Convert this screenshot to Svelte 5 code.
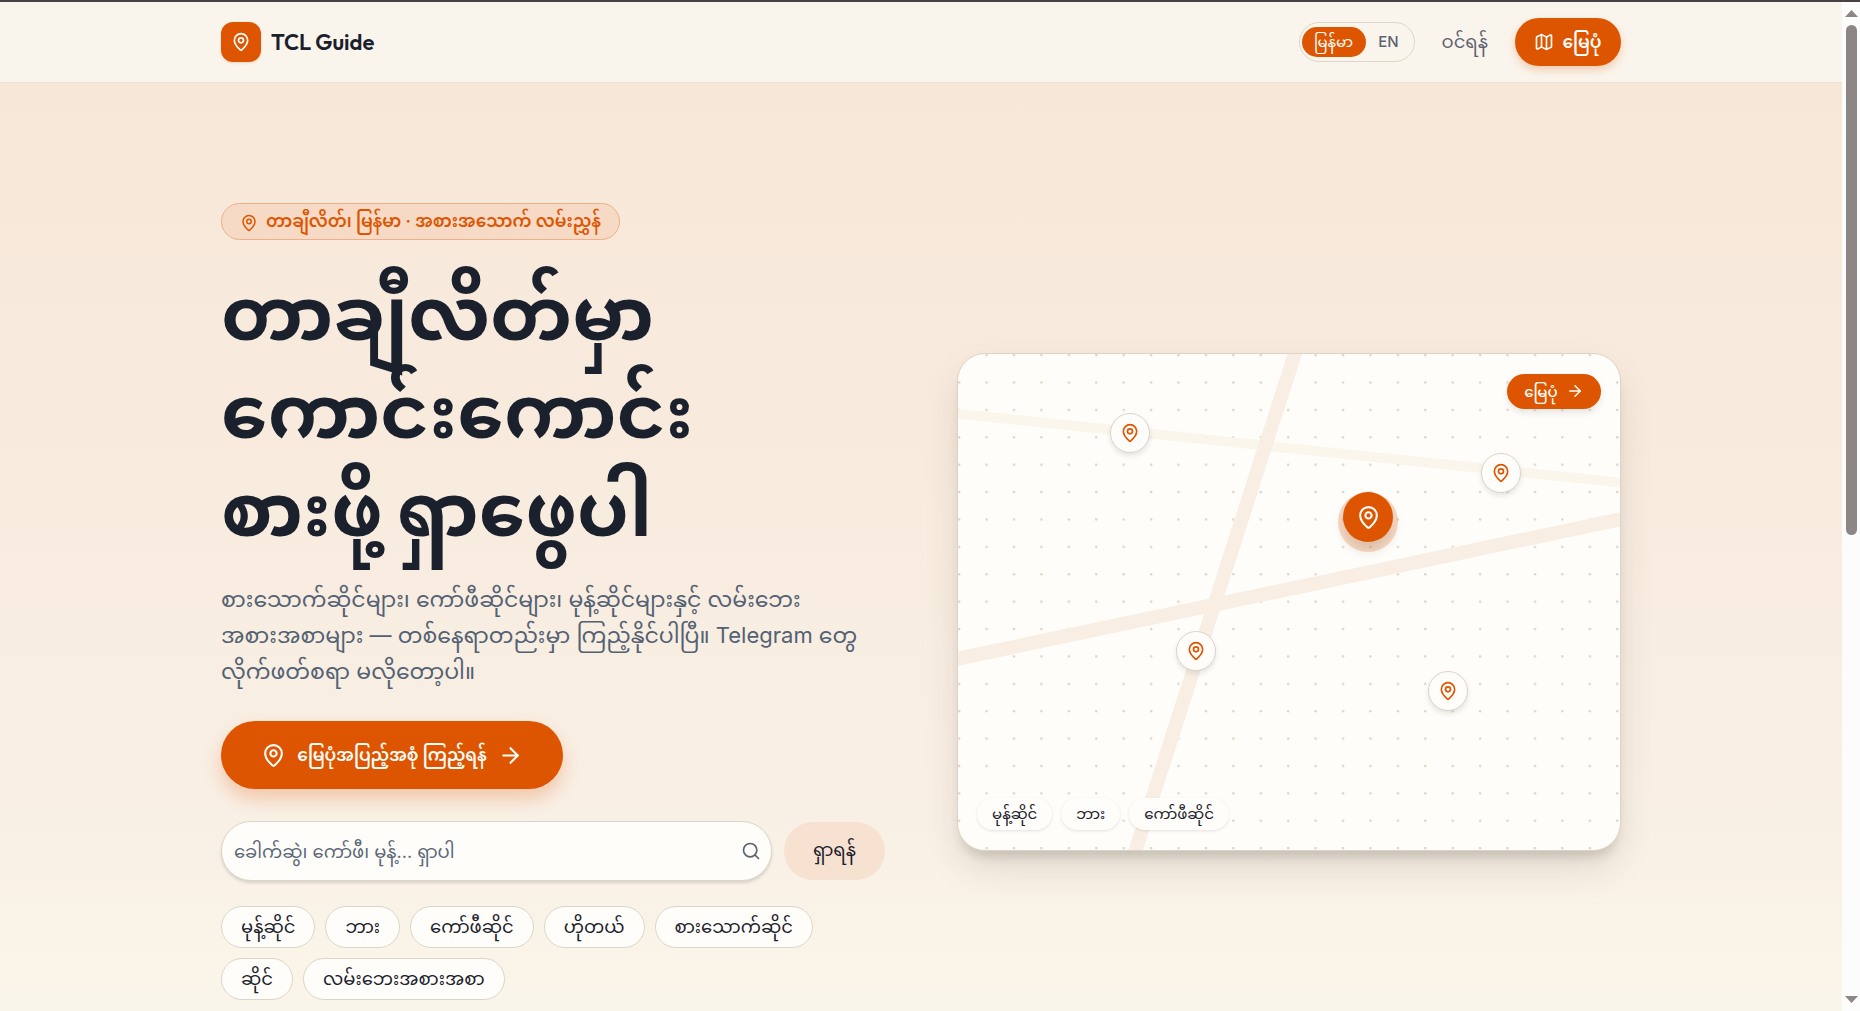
<script lang="ts">
	let lang = $state("my");
	let query = $state("");

	const categories = [
		"မုန့်ဆိုင်",
		"ဘား",
		"ကော်ဖီဆိုင်",
		"ဟိုတယ်",
		"စားသောက်ဆိုင်",
		"ဆိုင်",
		"လမ်းဘေးအစားအစာ"
	];

	const pins = [
		{ x: 26, y: 16, main: false },
		{ x: 82, y: 24, main: false },
		{ x: 62, y: 33, main: true },
		{ x: 36, y: 60, main: false },
		{ x: 74, y: 68, main: false }
	];
</script>

{#snippet pinIcon()}
	<svg class="icon" viewBox="0 0 24 24" aria-hidden="true">
		<path
			d="M20 10c0 4.993-5.539 10.193-7.399 11.799a1 1 0 0 1-1.202 0C9.539 20.193 4 14.993 4 10a8 8 0 0 1 16 0"
		/>
		<circle cx="12" cy="10" r="3" />
	</svg>
{/snippet}

{#snippet arrowIcon()}
	<svg class="icon" viewBox="0 0 24 24" aria-hidden="true">
		<path d="M5 12h14" />
		<path d="m12 5 7 7-7 7" />
	</svg>
{/snippet}

<div class="window">
	<div class="page">
		<header>
			<div class="container bar">
				<a class="brand" href="/">
					<span class="logo">{@render pinIcon()}</span>
					TCL Guide
				</a>
				<nav>
					<div class="langs">
						<button class:active={lang === "my"} onclick={() => (lang = "my")}>မြန်မာ</button>
						<button class:active={lang === "en"} onclick={() => (lang = "en")}>EN</button>
					</div>
					<a class="login" href="/login">ဝင်ရန်</a>
					<a class="mapLink" href="/map">
						<svg class="icon" viewBox="0 0 24 24" aria-hidden="true">
							<path
								d="M14.106 5.553a2 2 0 0 0 1.788 0l3.659-1.83A1 1 0 0 1 21 4.619v12.764a1 1 0 0 1-.553.894l-4.553 2.277a2 2 0 0 1-1.788 0l-4.212-2.106a2 2 0 0 0-1.788 0l-3.659 1.83A1 1 0 0 1 3 19.381V6.618a1 1 0 0 1 .553-.894l4.553-2.277a2 2 0 0 1 1.788 0z"
							/>
							<path d="M15 5.764v15" />
							<path d="M9 3.236v15" />
						</svg>
						မြေပုံ
					</a>
				</nav>
			</div>
		</header>

		<main>
			<div class="container hero">
				<section class="intro">
					<div class="badge">
						{@render pinIcon()}
						တာချီလိတ်၊ မြန်မာ · အစားအသောက် လမ်းညွှန်
					</div>
					<h1>တာချီလိတ်မှာ<br />ကောင်းကောင်း<br />စားဖို့ ရှာဖွေပါ</h1>
					<p>
						စားသောက်ဆိုင်များ၊ ကော်ဖီဆိုင်များ၊ မုန့်ဆိုင်များနှင့် လမ်းဘေး<br />
						အစားအစာများ — တစ်နေရာတည်းမှာ ကြည့်နိုင်ပါပြီ။ Telegram တွေ<br />
						လိုက်ဖတ်စရာ မလိုတော့ပါ။
					</p>
					<a class="cta" href="/map">
						{@render pinIcon()}
						မြေပုံအပြည့်အစုံ ကြည့်ရန်
						{@render arrowIcon()}
					</a>
					<form onsubmit={(e) => e.preventDefault()}>
						<label class="field">
							<input
								type="search"
								aria-label="ရှာရန်"
								placeholder="ခေါက်ဆွဲ၊ ကော်ဖီ၊ မုန့်... ရှာပါ"
								bind:value={query}
							/>
							<svg class="icon" viewBox="0 0 24 24" aria-hidden="true">
								<circle cx="11" cy="11" r="8" />
								<path d="m21 21-4.3-4.3" />
							</svg>
						</label>
						<button type="submit">ရှာရန်</button>
					</form>
					<div class="chips">
						{#each categories as name}
							<a href="/map">{name}</a>
						{/each}
					</div>
				</section>

				<section class="map">
					<svg class="streets" viewBox="0 0 664 498" preserveAspectRatio="none" aria-hidden="true">
						<defs>
							<pattern id="dots" width="27.5" height="27.5" patternUnits="userSpaceOnUse">
								<circle cx="1.2" cy="1.2" r="1.3" fill="#ddd4c7" />
							</pattern>
						</defs>
						<rect width="664" height="498" fill="url(#dots)" />
						<path d="M-10 59 674 130" stroke="#faf4ea" stroke-width="10" stroke-opacity="0.85" />
						<path d="M-10 308 674 164" stroke="#f8eee4" stroke-width="14" />
						<path d="M341 -10 175 508" stroke="#f8eee4" stroke-width="14" />
					</svg>
					{#each pins as pin}
						<span class="pin" class:main={pin.main} style="left: {pin.x}%; top: {pin.y}%">
							{@render pinIcon()}
						</span>
					{/each}
					<a class="open" href="/map">မြေပုံ {@render arrowIcon()}</a>
					<div class="tags">
						{#each categories.slice(0, 3) as name}
							<span>{name}</span>
						{/each}
					</div>
				</section>
			</div>
		</main>
	</div>

	<div class="scrollbar" aria-hidden="true">
		<svg viewBox="0 0 13 7"><path d="M0 7 6.500 0 13 7z" /></svg>
		<div class="track"><div class="thumb"></div></div>
		<svg viewBox="0 0 13 7"><path d="M0 0h13L6.500 7z" /></svg>
	</div>
</div>

<style>
	:global(body) {
		margin: 0;
	}

	.window {
		display: grid;
		grid-template-columns: 1fr 18px;
		height: 100vh;
		box-sizing: border-box;
		border-top: 2px solid #474145;
		overflow: hidden;
		color: #1a212d;
		font-family: Inter, "Noto Sans Myanmar", "Noto Sans", sans-serif;
		font-size: 18px;
	}

	.window *,
	.window *::before {
		box-sizing: border-box;
	}

	a {
		color: inherit;
		text-decoration: none;
	}

	button,
	input {
		font: inherit;
		color: inherit;
		border: 0;
		margin: 0;
	}

	button {
		cursor: pointer;
	}

	.icon {
		flex: none;
		width: 20px;
		height: 20px;
		fill: none;
		stroke: currentColor;
		stroke-width: 2;
		stroke-linecap: round;
		stroke-linejoin: round;
	}

	.page {
		display: flex;
		flex-direction: column;
		min-width: 0;
		overflow: hidden;
	}

	.container {
		width: 100%;
		max-width: 1400px;
		margin: 0 auto;
	}

	header {
		flex: none;
		background: #faf5ec;
		border-bottom: 1px solid #ece3d8;
	}

	.bar {
		display: flex;
		align-items: center;
		justify-content: space-between;
		height: 80px;
	}

	.brand {
		display: flex;
		align-items: center;
		gap: 10px;
		font-family: Outfit, Lato, sans-serif;
		font-size: 22px;
		font-weight: 600;
	}

	.logo {
		display: grid;
		place-items: center;
		width: 40px;
		height: 40px;
		border-radius: 12px;
		background: #dd5500;
		color: #fffdf9;
		box-shadow: 0 1px 3px #dd550033;
	}

	nav {
		display: flex;
		align-items: center;
		white-space: nowrap;
	}

	.langs {
		display: flex;
		align-items: center;
		width: 116px;
		height: 40px;
		padding: 0 2px;
		border: 1px solid #ddd6c8;
		border-radius: 20px;
	}

	.langs button {
		flex: 1;
		height: 30px;
		padding: 0;
		border-radius: 15px;
		background: none;
		color: #5c6370;
		font-size: 15px;
		font-weight: 500;
		line-height: 30px;
	}

	.langs .active {
		flex: none;
		width: 64px;
		background: #dd5500;
		color: #fffdf9;
		font-weight: 400;
	}

	.login {
		padding: 2px 27px 0;
		color: #5c6370;
	}

	.mapLink {
		display: flex;
		align-items: center;
		justify-content: center;
		gap: 8px;
		width: 106px;
		height: 48px;
		border-radius: 24px;
		background: #dd5500;
		color: #fffdf9;
		font-size: 17px;
		font-weight: 600;
		line-height: 48px;
		box-shadow: 0 4px 8px #dd550040;
	}

	main {
		flex: 1;
		background: linear-gradient(#f7e7d8, #f9efe4 75%, #faf5ea);
	}

	.hero {
		display: grid;
		grid-template-columns: 1fr 1fr;
		gap: 72px;
		align-items: center;
		padding: 120px 0 10px;
	}

	.intro {
		display: flex;
		flex-direction: column;
		align-items: flex-start;
		min-width: 0;
	}

	.badge {
		display: flex;
		align-items: center;
		gap: 8px;
		height: 37px;
		padding: 2px 18px 0;
		border: 1px solid #edb18a;
		border-radius: 19px;
		background: #f6dac5;
		color: #dd5500;
		font-size: 17px;
		font-weight: 600;
		white-space: nowrap;
	}

	.badge .icon {
		width: 18px;
		height: 18px;
	}

	h1 {
		margin: 24px 0 0;
		font-family: Outfit, "Noto Sans Myanmar", sans-serif;
		font-size: 74px;
		font-weight: 700;
		line-height: 98px;
		white-space: nowrap;
	}

	p {
		margin: 23px 0 0;
		color: #526173;
		font-size: 22px;
		line-height: 36px;
		white-space: nowrap;
	}

	.cta {
		display: flex;
		align-items: center;
		justify-content: center;
		gap: 11px;
		width: 342px;
		height: 68px;
		margin-top: 32px;
		border-radius: 34px;
		background: #dd5500;
		color: #fffdf9;
		font-size: 17px;
		font-weight: 600;
		line-height: 68px;
		white-space: nowrap;
		box-shadow: 0 10px 18px #dd550040;
	}

	.cta .icon {
		width: 25px;
		height: 25px;
	}

	form {
		display: flex;
		align-items: center;
		gap: 12px;
		width: 100%;
		margin-top: 32px;
	}

	.field {
		display: flex;
		flex: 1;
		align-items: center;
		height: 60px;
		padding: 0 10px 0 12px;
		border: 1px solid #ddd6c8;
		border-radius: 30px;
		background: #fffdf9;
		color: #5c6370;
		box-shadow: 0 2px 3px #1a212d26;
	}

	input {
		flex: 1;
		min-width: 0;
		height: 50px;
		padding: 0;
		outline: none;
		background: none;
	}

	input::placeholder {
		color: #5c6878;
		opacity: 1;
	}

	form button {
		width: 101px;
		height: 58px;
		padding: 0;
		border-radius: 29px;
		background: #f7e1d0;
	}

	.chips {
		display: flex;
		flex-wrap: wrap;
		gap: 10px;
		margin-top: 25px;
	}

	.chips a {
		height: 42px;
		padding: 0 19px;
		border: 1px solid #ddd6c8;
		border-radius: 21px;
		background: #fffdf9;
		line-height: 40px;
	}

	.map {
		position: relative;
		aspect-ratio: 4 / 3;
		overflow: hidden;
		border: 1px solid #ddd4c7;
		border-radius: 28px;
		background: #fffdf9;
		box-shadow:
			0 10px 10px -4px #3c342826,
			0 18px 36px -4px #3c342826;
	}

	.streets {
		display: block;
		width: 100%;
		height: 100%;
	}

	.pin {
		position: absolute;
		display: grid;
		place-items: center;
		width: 40px;
		height: 40px;
		border: 1px solid #ddd4c7;
		border-radius: 50%;
		background: #fffdf9;
		color: #dd5500;
		transform: translate(-50%, -50%);
		box-shadow: 0 3px 5px #1a212d1a;
	}

	.main {
		width: 50px;
		height: 50px;
		border: 0;
		background: #dd5500;
		color: #fffdf9;
		box-shadow:
			0 5px 0 5px #dd550038,
			0 8px 12px #1a212d26;
	}

	.main .icon {
		width: 25px;
		height: 25px;
	}

	.open {
		position: absolute;
		top: 20px;
		right: 19px;
		display: flex;
		align-items: center;
		justify-content: center;
		gap: 8px;
		width: 94px;
		height: 35px;
		border-radius: 18px;
		background: #dd5500;
		color: #fffdf9;
		font-size: 15px;
		font-weight: 500;
		line-height: 35px;
		box-shadow: 0 4px 6px #1a212d1a;
	}

	.open .icon {
		width: 18px;
		height: 18px;
	}

	.tags {
		position: absolute;
		left: 19px;
		bottom: 20px;
		display: flex;
		gap: 9px;
	}

	.tags span {
		height: 32px;
		padding: 0 15px;
		border-radius: 16px;
		background: #fffdf9;
		font-size: 15px;
		line-height: 32px;
		box-shadow: 0 1px 3px #1a212d1f;
	}

	.scrollbar {
		display: flex;
		flex-direction: column;
		align-items: center;
		padding: 8px 0;
		background: #fcfcfc;
	}

	.scrollbar svg {
		width: 13px;
		height: 7px;
		fill: #8c8684;
	}

	.track {
		flex: 1;
		padding: 8px 0;
	}

	.thumb {
		width: 11px;
		height: 53%;
		border-radius: 6px;
		background: #8c8684;
	}
</style>
